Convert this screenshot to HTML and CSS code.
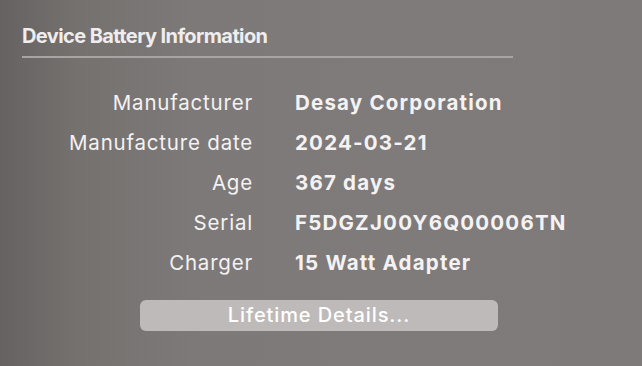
FILE: index.html
```html
<!DOCTYPE html>
<html lang="en">
<head>
  <meta charset="UTF-8">
  <title>Device Battery Information</title>
  <link rel="stylesheet" href="styles.css">
</head>
<body>
  <div class="panel">
    <h1>Device Battery Information</h1>

    <dl class="info">
      <dt>Manufacturer</dt>
      <dd>Desay Corporation</dd>
      <dt>Manufacture date</dt>
      <dd>2024-03-21</dd>
      <dt>Age</dt>
      <dd>367 days</dd>
      <dt>Serial</dt>
      <dd>F5DGZJ00Y6Q00006TN</dd>
      <dt>Charger</dt>
      <dd>15 Watt Adapter</dd>
    </dl>

    <div class="actions">
      <button class="btn">Lifetime Details...</button>
    </div>
  </div>
</body>
</html>
```

FILE: styles.css
```css
* {
  box-sizing: border-box;
}

body {
  margin: 0;
  padding: 0;
  font-family: Inter, 'Noto Sans', sans-serif;
  background: linear-gradient(90deg, #656261 0%, #75716f 12%, #7d7978 30%, #7f7b7a 60%, #7e7a79 100%);
  color: #f4f2f2;
  width: 642px;
  height: 366px;
  overflow: hidden;
}

.panel {
  padding: 24px 0 0 22px;
}

h1 {
  margin: 0;
  width: 491px;
  font-size: 20px;
  font-weight: 700;
  color: #efeded;
  padding-bottom: 8px;
  border-bottom: 2px solid #a8a4a3;
  letter-spacing: -0.6px;
}

.info {
  display: grid;
  grid-template-columns: 231px auto;
  column-gap: 42px;
  row-gap: 16px;
  margin: 33px 0 0 0;
  font-size: 20.5px;
  line-height: 24px;
}

.info dt {
  text-align: right;
  font-weight: 400;
  letter-spacing: 0.8px;
}

.info dd {
  margin: 0;
  font-weight: 700;
  letter-spacing: 1.2px;
}

.actions {
  margin: 25px 0 0 118px;
}

.btn {
  width: 358px;
  height: 31px;
  border: none;
  border-radius: 6px;
  background: #bebab9;
  color: #ffffff;
  font-family: inherit;
  font-size: 20px;
  font-weight: 500;
  letter-spacing: 0.9px;
  padding: 0;
  line-height: 31px;
}
```
